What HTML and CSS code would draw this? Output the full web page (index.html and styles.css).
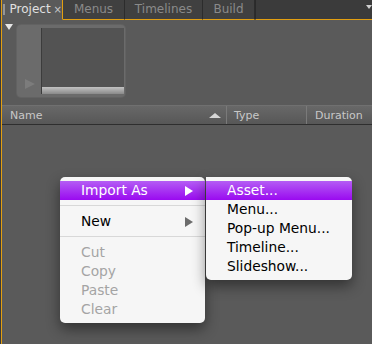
FILE: index.html
```html
<!DOCTYPE html>
<html>
<head>
    <title>Project Panel</title>
    <link rel="stylesheet" href="styles.css">
</head>
<body>
    <div class="panel">
        <!-- tab strip -->
        <div class="tabs">
            <div class="tab active"><span class="grip"></span>Project <span class="close">&times;</span></div>
            <div class="tab">Menus</div>
            <div class="tab timelines">Timelines</div>
            <div class="tab build">Build</div>
            <div class="tabfill"><span class="flyout"></span></div>
        </div>

        <!-- preview thumbnail -->
        <div class="preview">
            <span class="collapse"></span>
            <div class="thumb">
                <div class="thumbside"><span class="play"></span></div>
                <div class="screen"><div class="screenbar"></div></div>
            </div>
        </div>

        <!-- column headers -->
        <div class="columns">
            <div class="col name">Name<span class="sort"></span></div>
            <div class="col type">Type</div>
            <div class="col duration">Duration</div>
        </div>
        <div class="list"></div>
    </div>

    <div class="menu main">
        <div class="item hot">Import As<span class="arrow"></span></div>
        <div class="sep"></div>
        <div class="item">New<span class="arrow"></span></div>
        <div class="sep"></div>
        <div class="item off">Cut</div>
        <div class="item off">Copy</div>
        <div class="item off">Paste</div>
        <div class="item off">Clear</div>
    </div>

    <div class="menu sub">
        <div class="item hot">Asset...</div>
        <div class="item">Menu...</div>
        <div class="item">Pop-up Menu...</div>
        <div class="item">Timeline...</div>
        <div class="item">Slideshow...</div>
    </div>
</body>
</html>
```

FILE: styles.css
```css
body{
    margin:0;
    background-color:#3a3a3a;
    font-family:"DejaVu Sans", sans-serif;
    width:372px;
    height:344px;
    overflow:hidden;
    position:relative;
}
.panel{
    margin-left:1px;
    border-left:1px solid #e39f10;
    height:344px;
    background-color:#5a5a5a;
    display:flex;
    flex-direction:column;
}

/* tabs */
.tabs{
    display:flex;
    height:20px;
    background-color:#3b3b3b;
}
.tab{
    height:19px;
    border-bottom:1px solid #e39f10;
    border-right:1px solid #2c2c2c;
    color:#8a8a8a;
    font-size:12px;
    line-height:19px;
    text-align:center;
    width:61px;
    box-sizing:content-box;
    background-color:#404040;
}
.tab.timelines{
    width:77px;
}
.tab.build{
    width:51px;
}
.tab.active{
    width:60px;
    background-color:#5a5a5a;
    color:#e0e0e0;
    border-bottom:1px solid #5a5a5a;
    border-right:1px solid #e39f10;
    text-align:left;
    display:flex;
    align-items:center;
}
.grip{
    width:4px;
    height:11px;
    margin:0 5px 0 1px;
    background-image:radial-gradient(circle, #9a9a9a 0.7px, transparent 0.8px);
    background-size:2px 2px;
}
.close{
    font-size:10px;
    color:#c8c8c8;
    margin-left:3px;
}
.tabfill{
    flex:1;
    height:19px;
    border-bottom:1px solid #e39f10;
    border-left:1px solid #2a2a2a;
    position:relative;
}
.flyout{
    position:absolute;
    right:0;
    top:5px;
    border-left:3px solid transparent;
    border-right:3px solid transparent;
    border-top:4px solid #d0d0d0;
}

/* preview */
.preview{
    height:85px;
    display:flex;
    align-items:flex-start;
}
.collapse{
    margin:4px 0 0 3px;
    border-left:4px solid transparent;
    border-right:4px solid transparent;
    border-top:6px solid #e6e6e6;
}
.thumb{
    margin:5px 0 0 4px;
    width:108px;
    height:72px;
    background-color:#6b6b6b;
    border-radius:4px;
    display:flex;
    box-shadow:0 0 0 1px #626262;
}
.thumbside{
    width:24px;
    position:relative;
}
.play{
    position:absolute;
    left:8px;
    top:54px;
    border-top:5px solid transparent;
    border-bottom:5px solid transparent;
    border-left:10px solid #7c7c7c;
}
.screen{
    margin:3px 0 3px 0;
    width:82px;
    background-color:#535353;
    display:flex;
    flex-direction:column;
    justify-content:flex-end;
    border-left:1px solid #3c3c3c;
}
.screenbar{
    height:7px;
    background:linear-gradient(#c2c2c2, #8a8a8a);
}

/* column headers */
.columns{
    display:flex;
    height:18px;
    background:linear-gradient(#686868, #575757);
    border-top:1px solid #707070;
    border-bottom:1px solid #2e2e2e;
    color:#c8c8c8;
    font-size:11px;
    line-height:19px;
}
.col{
    position:relative;
}
.col.name{
    width:216px;
    padding-left:8px;
    border-right:1px solid #7a7a7a;
}
.sort{
    position:absolute;
    right:5px;
    top:7px;
    border-left:6px solid transparent;
    border-right:6px solid transparent;
    border-bottom:5px solid #d6d6d6;
}
.col.type{
    width:72px;
    padding-left:7px;
    border-right:1px solid #7a7a7a;
}
.col.duration{
    padding-left:8px;
}
.list{
    flex:1;
}

/* context menus */
.menu{
    position:absolute;
    top:177px;
    background-color:#f6f6f6;
    border-radius:5px;
    padding:4px 0;
    box-shadow:0 6px 14px rgba(0,0,0,0.45);
    font-size:13.8px;
}
.menu.main{
    left:60px;
    width:145px;
}
.menu.sub{
    left:206px;
    width:146px;
    border-top-left-radius:0;
}
.item{
    height:19px;
    line-height:19px;
    padding-left:21px;
    color:#000000;
    position:relative;
}
.item.hot{
    color:#ffffff;
    background:linear-gradient(#b45df4, #9a0af0);
}
.item.off{
    color:#a4a4a4;
}
.arrow{
    position:absolute;
    right:12px;
    top:5px;
    border-top:5px solid transparent;
    border-bottom:5px solid transparent;
    border-left:8px solid #6c6c6c;
}
.item.hot .arrow{
    border-left-color:#ffffff;
}
.sep{
    height:1px;
    margin:5px 0 6px 0;
    background-color:#d8d8d8;
}
```
